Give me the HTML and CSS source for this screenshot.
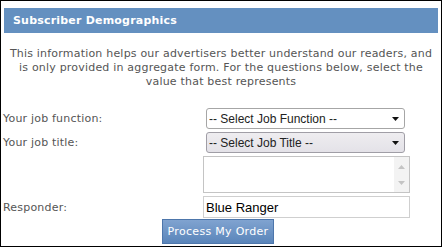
FILE: index.html
```html
<!DOCTYPE html>
<html>
<head>
<meta charset="utf-8">
<link rel="stylesheet" href="styles.css">
</head>
<body>
<div class="panel">
  <div class="header">Subscriber Demographics</div>
  <p class="intro">This information helps our advertisers better understand our readers, and is only provided in aggregate form. For the questions below, select the value that best represents</p>
  <div class="form">
    <label class="label">Your job function:</label>
    <div class="sel-wrap">
      <select class="sel"><option>-- Select Job Function --</option></select>
      <svg class="arrow" width="7" height="4" viewBox="0 0 7 4"><path d="M0 0H7L3.5 4Z" fill="#111"/></svg>
    </div>
    <label class="label">Your job title:</label>
    <div class="sel-wrap">
      <select class="sel sel-alt"><option>-- Select Job Title --</option></select>
      <svg class="arrow" width="7" height="4" viewBox="0 0 7 4"><path d="M0 0H7L3.5 4Z" fill="#111"/></svg>
    </div>
    <span class="label"></span>
    <div class="area">
      <textarea class="area-text"></textarea>
      <div class="scroll">
        <svg width="7" height="4" viewBox="0 0 7 4"><path d="M0 4H7L3.5 0Z" fill="#c4c4c4"/></svg>
        <svg width="7" height="4" viewBox="0 0 7 4"><path d="M0 0H7L3.5 4Z" fill="#c4c4c4"/></svg>
      </div>
    </div>
    <label class="label">Responder:</label>
    <input class="text" type="text" value="Blue Ranger">
  </div>
  <div class="actions">
    <button class="btn">Process My Order</button>
  </div>
</div>
</body>
</html>
```
FILE: styles.css
```css
html, body {
  margin: 0;
  padding: 0;
  background: #fff;
}
.panel {
  box-sizing: border-box;
  width: 442px;
  height: 247px;
  border: 1px solid #000;
  font-family: "DejaVu Sans", Verdana, sans-serif;
  font-size: 11px;
  letter-spacing: 0.2px;
  color: #555;
  padding-top: 7px;
}
.header {
  margin: 0 3px;
  height: 25px;
  line-height: 25px;
  background: #6490c0;
  color: #fff;
  font-weight: bold;
  font-size: 11px;
  letter-spacing: 0.2px;
  padding-left: 9px;
}
.intro {
  margin: 14px 6px 0 6px;
  text-align: center;
  line-height: 14px;
}
.form {
  display: grid;
  grid-template-columns: 200px 207px;
  row-gap: 3px;
  margin-top: 19px;
  margin-left: 2px;
  align-items: center;
}
.label {
  color: #555;
}
.sel-wrap {
  position: relative;
  margin-left: 3px;
  width: 199px;
  height: 21px;
}
.sel {
  appearance: none;
  -webkit-appearance: none;
  box-sizing: border-box;
  width: 199px;
  height: 21px;
  border: 1px solid #a6a6a6;
  border-radius: 3px;
  background: #fff;
  font-family: "Liberation Sans", Arial, sans-serif;
  font-size: 12px;
  letter-spacing: 0;
  color: #222;
  padding: 0 0 0 2px;
  margin: 0;
}
.sel-alt {
  background: linear-gradient(#eeedf0, #e4e2e8);
  border-color: #a09ea6;
}
.arrow {
  position: absolute;
  right: 6px;
  top: 9px;
  pointer-events: none;
}
.area {
  display: flex;
  box-sizing: border-box;
  width: 207px;
  height: 37px;
  border: 1px solid #c4c4c4;
  background: #fff;
}
.area-text {
  flex: 1;
  border: 0;
  margin: 0;
  padding: 0;
  resize: none;
  outline: none;
}
.scroll {
  width: 15px;
  background: #f3f3f3;
  display: flex;
  flex-direction: column;
  justify-content: space-between;
  align-items: center;
  padding: 8px 0 7px 0;
}
.text {
  box-sizing: border-box;
  width: 207px;
  height: 22px;
  border: 1px solid #cfcfcf;
  margin: 0;
  padding: 0 2px;
  font-family: "Liberation Sans", Arial, sans-serif;
  font-size: 13px;
  letter-spacing: 0;
  color: #000;
}
.actions {
  display: flex;
  justify-content: center;
  padding-right: 6px;
  margin-top: 1px;
}
.btn {
  box-sizing: border-box;
  width: 112px;
  height: 25px;
  border: 1px solid #4d76ab;
  background: linear-gradient(#80a3d0, #5a85ba);
  color: #fff;
  font-family: "DejaVu Sans", Verdana, sans-serif;
  font-size: 11px;
  letter-spacing: 0.3px;
  padding: 0;
  margin: 0;
}
```
